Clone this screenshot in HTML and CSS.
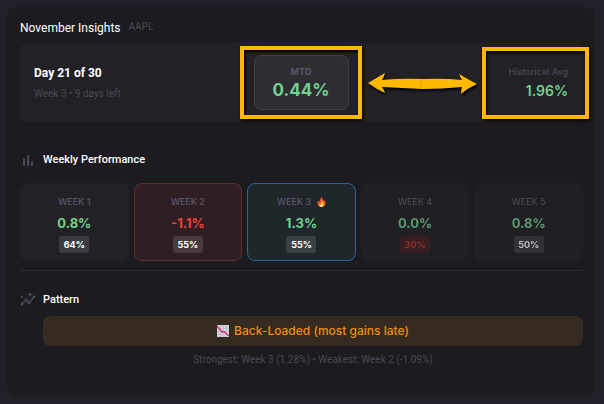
FILE: index.html
```html
<!DOCTYPE html>
<html lang="en">

<head>
    <meta charset="UTF-8">
    <meta name="viewport" content="width=device-width, initial-scale=1.0">
    <title>November Insights</title>
    <link rel="stylesheet" href="styles.css">
</head>

<body>
    <main class="card">
        <header class="card-header">
            <h1 class="card-title">November Insights</h1>
            <span class="ticker">AAPL</span>
        </header>

        <section class="summary">
            <div class="summary-day">
                <div class="day">Day 21 of 30</div>
                <div class="day-note">Week 3 • 9 days left</div>
            </div>
            <div class="mtd">
                <div class="mtd-label">MTD</div>
                <div class="mtd-value">0.44%</div>
                <span class="marker marker-mtd"></span>
                <svg class="arrow" viewBox="0 0 112 24" fill="#ffb900">
                    <path d="M1 11 L18 1 Q17 5 15 8 Q35 6 56 7 Q76 6 95 8 Q93 5 92 2 Q102 8 110 12 Q101 16 94 22 Q94 18 95 15 Q75 17 56 17 Q35 16 15 15 Q17 18 18 21 Q9 17 1 11Z" />
                    <path d="M54 9 q-2 4 1 7" fill="none" stroke="#e5a400" />
                </svg>
            </div>
            <div class="historical">
                <div class="historical-label">Historical Avg</div>
                <div class="historical-value">1.96%</div>
                <span class="marker marker-historical"></span>
            </div>
        </section>

        <section class="weekly">
            <div class="section-header">
                <svg class="section-icon" viewBox="0 0 16 16" fill="#4d495a">
                    <rect x="3" y="6" width="2" height="8" rx="1" />
                    <rect x="7" y="3" width="2" height="11" rx="1" />
                    <rect x="11" y="9" width="2" height="5" rx="1" />
                </svg>
                <h2 class="section-title">Weekly Performance</h2>
            </div>
            <div class="weeks">
                <div class="week">
                    <div class="week-label">WEEK 1</div>
                    <div class="week-value">0.8%</div>
                    <span class="badge">64%</span>
                </div>
                <div class="week week-worst">
                    <div class="week-label">WEEK 2</div>
                    <div class="week-value negative">-1.1%</div>
                    <span class="badge">55%</span>
                </div>
                <div class="week week-current">
                    <div class="week-label">WEEK 3
                        <svg class="flame" viewBox="0 0 10 12">
                            <path d="M4 0 C7 1 6 4 8 5 L8 3 C12 8 9 12 5 12 C1 12 -1 8 1 4 L2 6 C4 4 4 2 4 0Z" fill="#f2572b" />
                            <path d="M5 4 C6 6 8 7 8 9 C8 11 6 12 5 12 C3 12 2 10 2 8 L4 9 C5 7 5 6 5 4Z" fill="#ffb52e" />
                            <path d="M5 8 C7 10 6 12 5 12 C4 12 3 11 5 8Z" fill="#fff09a" />
                        </svg>
                    </div>
                    <div class="week-value">1.3%</div>
                    <span class="badge">55%</span>
                </div>
                <div class="week week-future">
                    <div class="week-label">WEEK 4</div>
                    <div class="week-value">0.0%</div>
                    <span class="badge badge-low">30%</span>
                </div>
                <div class="week week-future">
                    <div class="week-label">WEEK 5</div>
                    <div class="week-value">0.8%</div>
                    <span class="badge">50%</span>
                </div>
            </div>
        </section>

        <section class="pattern">
            <div class="section-header">
                <svg class="section-icon" viewBox="0 0 16 16" fill="#4d495a">
                    <path d="M2 12 L6 8 L9 11 L14 5" fill="none" stroke="#4d495a" stroke-width="1.4" />
                    <circle cx="2" cy="12" r="1.5" />
                    <circle cx="6" cy="8" r="1.4" />
                    <circle cx="9" cy="11" r="1.4" />
                    <circle cx="14" cy="5" r="1.4" />
                    <path d="M10 0 l.8 1.7 1.7 .8 -1.7 .8 -.8 1.7 -.8 -1.7 -1.7 -.8 1.7 -.8Z" />
                    <path d="M2 3 l.6 1.2 1.2 .6 -1.2 .6 -.6 1.2 -.6 -1.2 -1.2 -.6 1.2 -.6Z" />
                </svg>
                <h2 class="section-title">Pattern</h2>
            </div>
            <div class="pattern-body">
                <div class="pattern-banner">
                    <svg class="chart-down" viewBox="0 0 12 12">
                        <rect width="12" height="12" fill="#d3cfdd" />
                        <path d="M0 3.5H12M0 6.5H12M0 9.5H12M3.5 0V12M6.5 0V12M9.5 0V12" stroke="#b8b0c8" stroke-width=".5" />
                        <path d="M0 1 L5 7 L7 6.500 L12 11" fill="none" stroke="#d0305f" stroke-width="1.3" />
                    </svg>
                    <span>Back-Loaded (most gains late)</span>
                </div>
                <p class="pattern-note">Strongest: Week 3 (1.28%) • Weakest: Week 2 (-1.09%)</p>
            </div>
        </section>
    </main>
</body>

</html>
```

FILE: styles.css
```css
* {
    box-sizing: border-box;
}

body {
    margin: 0;
    padding: 7px 9px 8px 7px;
    background: #211f28;
    color: #fff;
    font-family: Roboto, "Liberation Sans", sans-serif;
}

.card {
    padding: 12px 12px 28px 13px;
    border-radius: 10px;
    background: #1c1b20;
}

.card-header {
    display: flex;
    align-items: flex-start;
    gap: 8px;
    height: 24px;
}

.card-title {
    margin: 0;
    font-size: 12px;
    font-weight: 400;
    line-height: 18px;
}

.ticker {
    color: #4b4756;
    font-size: 10px;
    line-height: 16px;
}

.summary {
    display: grid;
    grid-template-columns: 1fr auto 1fr;
    align-items: center;
    padding: 12px 15px 12px 14px;
    border-radius: 8px;
    background: #222126;
}

.day {
    font-size: 12px;
    font-weight: 700;
    line-height: 18px;
}

.day-note {
    margin-top: 4px;
    color: #4b4756;
    font-size: 10px;
    line-height: 16px;
}

.mtd {
    position: relative;
    width: 95px;
    padding: 8px 0;
    border: 1px solid #3e3d43;
    border-radius: 7px;
    background: #2e2d32;
    font-family: Inter, sans-serif;
    text-align: center;
}

.mtd-label {
    color: #5c586b;
    font-size: 9px;
    font-weight: 700;
    line-height: 15px;
}

.mtd-value {
    color: #72d18f;
    font-size: 17px;
    font-weight: 700;
    line-height: 22px;
}

.marker {
    position: absolute;
    border: 4px solid #ffb900;
    box-shadow: 1px 2px 3px #000, inset 1px 2px 3px #000;
}

.marker-mtd {
    inset: -10px -14px -10px -15px;
}

.arrow {
    position: absolute;
    top: 16px;
    left: 112px;
    width: 112px;
    height: 24px;
    filter: drop-shadow(1px 2px 1px #000);
}

.historical {
    position: relative;
    font-family: Inter, sans-serif;
    text-align: right;
}

.historical-label {
    color: #4b4756;
    font-size: 9px;
    font-weight: 500;
    line-height: 16px;
}

.historical-value {
    color: #72d18f;
    font-size: 14px;
    font-weight: 600;
    line-height: 22px;
}

.marker-historical {
    top: -17px;
    right: -21px;
    bottom: -17px;
    width: 107px;
}

.weekly {
    padding: 29px 0 9px;
    border-bottom: 1px solid #2b2a30;
}

.section-header {
    display: flex;
    align-items: center;
    gap: 7px;
    height: 18px;
}

.section-icon {
    width: 16px;
    height: 16px;
}

.section-title {
    margin: 0;
    font-size: 11px;
    font-weight: 500;
    line-height: 16px;
}

.weeks {
    display: grid;
    grid-template-columns: repeat(5, 1fr);
    gap: 5px;
    margin-top: 14px;
}

.week {
    padding: 9px 0 7px;
    border: 1px solid #222126;
    border-radius: 8px;
    background: #222126;
    font-family: Inter, sans-serif;
    text-align: center;
}

.week-worst {
    border-color: #632a31;
    background: #2f1f25;
}

.week-current {
    border-color: #2763a0;
    background: #1f272a;
}

.week-future {
    opacity: 0.7;
}

.week-label {
    display: flex;
    align-items: center;
    justify-content: center;
    gap: 6px;
    color: #5c586b;
    font-size: 9px;
    font-weight: 500;
    line-height: 18px;
}

.flame {
    width: 9px;
    height: 10px;
}

.week-value {
    color: #72d18f;
    font-size: 13px;
    font-weight: 700;
    line-height: 24px;
}

.negative {
    color: #ef3e36;
}

.badge {
    display: block;
    width: 30px;
    margin: 1px auto 0;
    border-radius: 3px;
    background: rgba(255, 255, 255, 0.12);
    font-size: 9px;
    font-weight: 700;
    line-height: 17px;
}

.badge-low {
    background: #422024;
    color: #c33632;
}

.pattern {
    padding-top: 20px;
}

.pattern-body {
    margin: 7px 0 0 23px;
    text-align: center;
}

.pattern-banner {
    display: flex;
    align-items: center;
    justify-content: center;
    gap: 5px;
    padding: 6px;
    border-radius: 7px;
    background: #352a20;
    color: #ed8d16;
    font-family: Inter, sans-serif;
    font-size: 12px;
    font-weight: 500;
    line-height: 18px;
}

.chart-down {
    width: 12px;
    height: 12px;
}

.pattern-note {
    margin: 6px 0 0;
    color: #4b4756;
    font-size: 10px;
    line-height: 16px;
}
```
